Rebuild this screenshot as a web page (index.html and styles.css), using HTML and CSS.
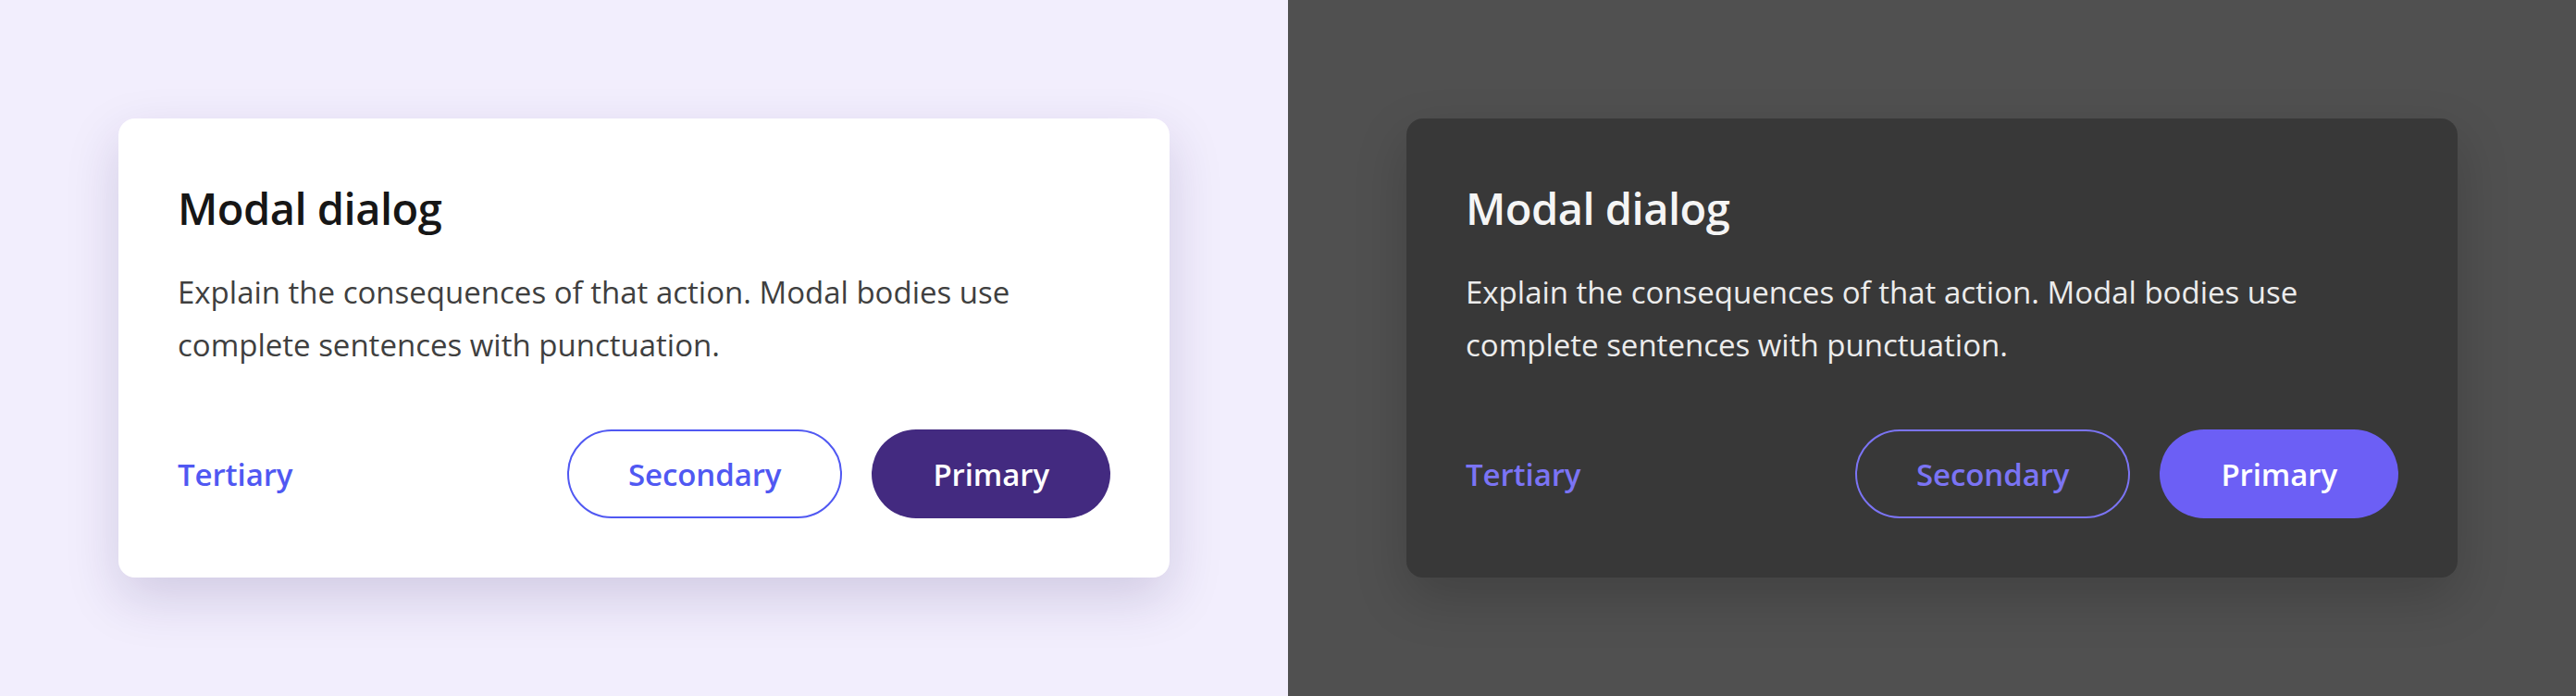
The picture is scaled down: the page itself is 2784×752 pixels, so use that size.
FILE: index.html
```html
<!DOCTYPE html>
<html lang="en">
<head>
<meta charset="utf-8">
<title>Modal dialog</title>
<link rel="stylesheet" href="styles.css">
</head>
<body>
<div class="stage">
  <section class="panel panel-light">
    <div class="modal">
      <h2 class="modal-title">Modal dialog</h2>
      <p class="modal-body">Explain the consequences of that action. Modal bodies use complete sentences with punctuation.</p>
      <div class="modal-actions">
        <button class="btn btn-tertiary">Tertiary</button>
        <div class="btn-group">
          <button class="btn btn-secondary">Secondary</button>
          <button class="btn btn-primary">Primary</button>
        </div>
      </div>
    </div>
  </section>
  <section class="panel panel-dark">
    <div class="modal">
      <h2 class="modal-title">Modal dialog</h2>
      <p class="modal-body">Explain the consequences of that action. Modal bodies use complete sentences with punctuation.</p>
      <div class="modal-actions">
        <button class="btn btn-tertiary">Tertiary</button>
        <div class="btn-group">
          <button class="btn btn-secondary">Secondary</button>
          <button class="btn btn-primary">Primary</button>
        </div>
      </div>
    </div>
  </section>
</div>
</body>
</html>
```

FILE: styles.css
```css
* { box-sizing: border-box; }
html, body { margin: 0; padding: 0; }
body {
  font-family: "Open Sans", "Noto Sans", sans-serif;
  width: 2784px;
  height: 752px;
  overflow: hidden;
}
.stage {
  display: grid;
  grid-template-columns: 1392px 1392px;
  height: 752px;
}
.panel {
  padding: 128px;
  display: flex;
}
.panel-light { background: #f2eefd; }
.panel-dark { background: #505050; }

.modal {
  flex: 1;
  border-radius: 18px;
  padding: 64px;
  display: flex;
  flex-direction: column;
}
.panel-light .modal {
  background: #ffffff;
  box-shadow: 0 22px 56px rgba(50, 30, 100, 0.17);
}
.panel-dark .modal {
  background: #383838;
  box-shadow: 0 22px 56px rgba(0, 0, 0, 0.18);
}

.modal-title {
  margin: 0;
  font-size: 47px;
  line-height: 66px;
  font-weight: 600;
  letter-spacing: -0.5px;
}
.modal-body {
  margin: 29px 0 0;
  font-size: 33px;
  line-height: 57px;
  font-weight: 400;
}
.panel-light .modal-title { color: #161616; }
.panel-light .modal-body { color: #3f3f3f; }
.panel-dark .modal-title { color: #f5f5f5; }
.panel-dark .modal-body { color: #ececec; }

.modal-actions {
  margin-top: auto;
  display: flex;
  align-items: center;
  justify-content: space-between;
}
.btn-group {
  display: flex;
  gap: 32px;
}
.btn {
  font-family: inherit;
  font-size: 33px;
  font-weight: 600;
  height: 96px;
  padding: 0 64px;
  border-radius: 48px;
  border: 2px solid transparent;
  background: none;
  cursor: pointer;
  letter-spacing: -0.1px;
}
.btn-tertiary { padding: 0; height: auto; border: 0; }

.panel-light .btn-tertiary { color: #5058f2; }
.panel-light .btn-secondary { color: #5058f2; border-color: #5058f2; background: #fff; }
.panel-light .btn-primary { color: #ffffff; background: #432a80; }

.panel-dark .btn-tertiary { color: #7b74f4; }
.panel-dark .btn-secondary { color: #7b74f4; border-color: #7b74f4; }
.panel-dark .btn-primary { color: #ffffff; background: #6c5ff5; }
```
